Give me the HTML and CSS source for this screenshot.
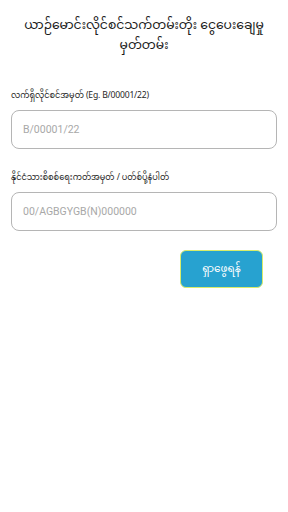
FILE: index.html
```html
<!DOCTYPE html>
<html lang="my">
<head>
<meta charset="utf-8">
<link rel="stylesheet" href="styles.css">
</head>
<body>
<div class="page">
  <h1 class="title"><span class="line">ယာဉ်မောင်းလိုင်စင်သက်တမ်းတိုး ငွေပေးချေမှု</span> <span class="line">မှတ်တမ်း</span></h1>
  <div class="field field-first">
    <label class="label">လက်ရှိလိုင်စင်အမှတ် <span class="latin">(Eg. B/00001/22)</span></label>
    <div class="input"><span class="placeholder">B/00001/22</span></div>
  </div>
  <div class="field">
    <label class="label">နိုင်ငံသားစိစစ်ရေးကတ်အမှတ် <span class="latin">/</span> ပတ်စ်ပို့နံပါတ်</label>
    <div class="input"><span class="placeholder">00/AGBGYGB(N)000000</span></div>
  </div>
  <div class="actions">
    <button class="btn">ရှာဖွေရန်</button>
  </div>
</div>
</body>
</html>
```
FILE: styles.css
```css
html, body {
  margin: 0;
  padding: 0;
  background: #ffffff;
}
body {
  font-family: "Noto Sans Myanmar", "Padauk", "Myanmar Text", "Noto Sans", Roboto, sans-serif;
  color: #222;
  width: 288px;
  height: 512px;
}
.page {
  padding: 17px 11px 0 11px;
  display: flex;
  flex-direction: column;
}
.title {
  margin: 0;
  font-size: 12.4px;
  font-weight: normal;
  line-height: 20px;
  text-align: center;
  color: #1a1a1a;
}
.line {
  display: block;
  white-space: nowrap;
}
.field {
  display: flex;
  flex-direction: column;
  margin-top: 21px;
}
.field-first {
  margin-top: 31px;
}
.label {
  font-size: 8.2px;
  line-height: 14px;
  color: #1f1f1f;
  margin-bottom: 7px;
}
.latin {
  font-family: "Noto Sans", sans-serif;
  font-size: 8.6px;
  letter-spacing: -0.2px;
}
.input {
  height: 37px;
  border: 1px solid #b5b5b5;
  border-radius: 8px;
  display: flex;
  align-items: center;
  padding-left: 11px;
}
.placeholder {
  font-family: Roboto, "Noto Sans", sans-serif;
  font-size: 10.5px;
  color: #a8a8a8;
}
.actions {
  display: flex;
  justify-content: flex-end;
  margin-top: 19px;
  padding-right: 14px;
}
.btn {
  width: 83px;
  height: 38px;
  background: #27a2d0;
  border: 1.5px solid #d8ec6a;
  border-radius: 6px;
  color: #fff;
  font-family: inherit;
  font-size: 10.5px;
  padding: 0;
}
```
